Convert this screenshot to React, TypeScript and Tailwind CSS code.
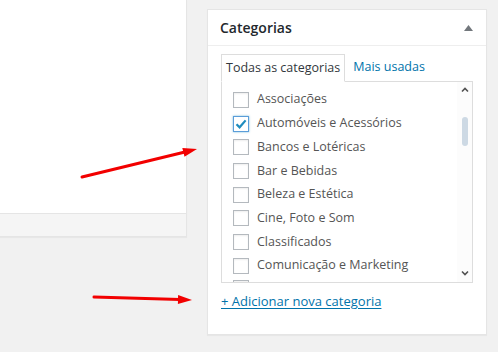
import { useState } from 'react';

const categories = [
  'Associações',
  'Automóveis e Acessórios',
  'Bancos e Lotéricas',
  'Bar e Bebidas',
  'Beleza e Estética',
  'Cine, Foto e Som',
  'Classificados',
  'Comunicação e Marketing',
];

function Checkbox({ checked }: { checked: boolean }) {
  return (
    <span
      className={`w-4 h-4 shrink-0 flex items-center justify-center bg-white border ${
        checked ? 'border-[#5b9dd9] shadow-[0_0_2px_rgba(30,140,190,0.6)]' : 'border-[#b4b9be] shadow-[inset_0_1px_2px_rgba(0,0,0,0.07)]'
      }`}
    >
      {checked && (
        <svg width="14" height="14" viewBox="0 0 14 14">
          <path d="M2.5 7.2 L5.6 10.3 L11.6 3.4" fill="none" stroke="#1e8cbe" strokeWidth="2.2" />
        </svg>
      )}
    </span>
  );
}

export default function App() {
  const [checked] = useState<string[]>(['Automóveis e Acessórios']);

  return (
    <div
      className="relative w-[498px] h-[352px] bg-[#f1f1f1] flex overflow-hidden"
      style={{ fontFamily: '"Open Sans", "Noto Sans", sans-serif' }}
    >
      {/* editor panel on the left */}
      <div className="w-[187px] h-[237px] shrink-0 flex flex-col bg-white border-r border-b border-[#e5e5e5] shadow-[0_1px_1px_rgba(0,0,0,0.04)]">
        <div className="flex-1" />
        <div className="h-[23px] bg-[#f5f5f5] border-t border-[#e5e5e5]" />
      </div>

      {/* categories box */}
      <div className="ml-[20px] mt-[9px] w-[280px] h-[326px] shrink-0 flex flex-col bg-white border border-[#e5e5e5] shadow-[0_1px_1px_rgba(0,0,0,0.04)]">
        <div className="h-[36px] flex items-center justify-between pl-[12px] pr-[13px] border-b border-[#eee]">
          <span className="text-[14px] font-semibold text-[#23282d]">Categorias</span>
          <svg width="9" height="6" viewBox="0 0 9 6">
            <path d="M4.5 0 L9 6 L0 6 Z" fill="#72777c" />
          </svg>
        </div>

        <div className="px-[13px] pt-[8px]">
          <div className="flex items-end h-[27px] text-[12.5px]">
            <span className="h-[28px] -mb-px relative z-10 flex items-center px-[4px] bg-white border border-[#ddd] border-b-white text-[#32373c]">
              Todas as categorias
            </span>
            <span className="h-[27px] flex items-center px-[8px] text-[#0073aa]">Mais usadas</span>
          </div>

          <div className="h-[202px] flex border border-[#ddd] overflow-hidden">
            <div className="flex-1 pt-[6px] pl-[11px] overflow-hidden">
              {categories.map((c) => (
                <div key={c} className="h-[23.7px] flex items-center gap-[8px] text-[12.5px] text-[#555]">
                  <Checkbox checked={checked.includes(c)} />
                  <span className="whitespace-nowrap">{c}</span>
                </div>
              ))}
              {/* next row, scrolled out of view */}
              <div className="h-[23.7px] flex items-start pt-[2px]">
                <Checkbox checked={false} />
              </div>
            </div>
            <div className="w-[15px] shrink-0 flex flex-col items-center bg-[#fcfcfc] pt-[5px] pb-[6px]">
              <svg width="8" height="6" viewBox="0 0 8 6">
                <path d="M1 4.5 L4 1.5 L7 4.5" fill="none" stroke="#505050" strokeWidth="1.6" />
              </svg>
              <div className="mt-[24px] w-[6px] h-[29px] rounded-[3px] bg-[#cdd9e4]" />
              <div className="flex-1" />
              <svg width="8" height="6" viewBox="0 0 8 6">
                <path d="M1 1.5 L4 4.5 L7 1.5" fill="none" stroke="#505050" strokeWidth="1.6" />
              </svg>
            </div>
          </div>

          <a href="#" className="block mt-[8px] text-[13px] leading-[20px] text-[#0073aa] underline underline-offset-2">
            + Adicionar nova categoria
          </a>
        </div>
      </div>

      {/* red annotation arrows */}
      <svg className="absolute inset-0 pointer-events-none" width="498" height="352" viewBox="0 0 498 352">
        <line x1="82" y1="177" x2="185" y2="152" stroke="#f20000" strokeWidth="3" strokeLinecap="round" />
        <polygon points="197,149 184.5,156.7 182.3,147.9" fill="#f20000" />
        <line x1="94" y1="297" x2="180" y2="299.6" stroke="#f20000" strokeWidth="3" strokeLinecap="round" />
        <polygon points="192,300 177.9,304.1 178.1,295.1" fill="#f20000" />
      </svg>
    </div>
  );
}
